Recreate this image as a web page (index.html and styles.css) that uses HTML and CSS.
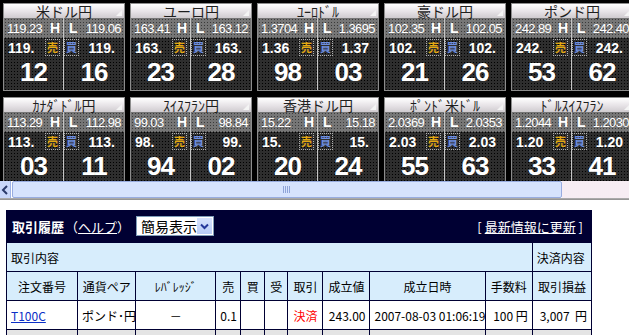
FILE: index.html
```html
<!DOCTYPE html>
<html lang="ja">
<head>
<meta charset="utf-8">
<link rel="stylesheet" href="styles.css">
</head>
<body>
<div class="board">
  <div class="pane"><div class="ttl">米ドル円<span class="grip"></span></div><div class="body">
    <div class="half"><div class="hl"><span>119.23</span><b>H</b></div><div class="mid"><b>119.</b><span class="tag sell">売</span></div><div class="big">12</div></div>
    <div class="half r"><div class="hl"><b>L</b><span>119.06</span></div><div class="mid"><span class="tag buy">買</span><b>119.</b></div><div class="big">16</div></div>
  </div></div>
  <div class="pane"><div class="ttl">ユーロ円<span class="grip"></span></div><div class="body">
    <div class="half"><div class="hl"><span>163.41</span><b>H</b></div><div class="mid"><b>163.</b><span class="tag sell">売</span></div><div class="big">23</div></div>
    <div class="half r"><div class="hl"><b>L</b><span>163.12</span></div><div class="mid"><span class="tag buy">買</span><b>163.</b></div><div class="big">28</div></div>
  </div></div>
  <div class="pane"><div class="ttl">ﾕｰﾛﾄﾞﾙ<span class="grip"></span></div><div class="body">
    <div class="half"><div class="hl"><span>1.3704</span><b>H</b></div><div class="mid"><b>1.36</b><span class="tag sell">売</span></div><div class="big">98</div></div>
    <div class="half r"><div class="hl"><b>L</b><span>1.3695</span></div><div class="mid"><span class="tag buy">買</span><b>1.37</b></div><div class="big">03</div></div>
  </div></div>
  <div class="pane"><div class="ttl">豪ドル円<span class="grip"></span></div><div class="body">
    <div class="half"><div class="hl"><span>102.35</span><b>H</b></div><div class="mid"><b>102.</b><span class="tag sell">売</span></div><div class="big">21</div></div>
    <div class="half r"><div class="hl"><b>L</b><span>102.05</span></div><div class="mid"><span class="tag buy">買</span><b>102.</b></div><div class="big">26</div></div>
  </div></div>
  <div class="pane"><div class="ttl">ポンド円<span class="grip"></span></div><div class="body">
    <div class="half"><div class="hl"><span>242.89</span><b>H</b></div><div class="mid"><b>242.</b><span class="tag sell">売</span></div><div class="big">53</div></div>
    <div class="half r"><div class="hl"><b>L</b><span>242.40</span></div><div class="mid"><span class="tag buy">買</span><b>242.</b></div><div class="big">62</div></div>
  </div></div>

  <div class="pane"><div class="ttl">ｶﾅﾀﾞﾄﾞﾙ円<span class="grip"></span></div><div class="body">
    <div class="half"><div class="hl"><span>113.29</span><b>H</b></div><div class="mid"><b>113.</b><span class="tag sell">売</span></div><div class="big">03</div></div>
    <div class="half r"><div class="hl"><b>L</b><span>112.98</span></div><div class="mid"><span class="tag buy">買</span><b>113.</b></div><div class="big">11</div></div>
  </div></div>
  <div class="pane"><div class="ttl">ｽｲｽﾌﾗﾝ円<span class="grip"></span></div><div class="body">
    <div class="half"><div class="hl"><span>99.03</span><b>H</b></div><div class="mid"><b>98.</b><span class="tag sell">売</span></div><div class="big">94</div></div>
    <div class="half r"><div class="hl"><b>L</b><span>98.84</span></div><div class="mid"><span class="tag buy">買</span><b>99.</b></div><div class="big">02</div></div>
  </div></div>
  <div class="pane"><div class="ttl">香港ドル円<span class="grip"></span></div><div class="body">
    <div class="half"><div class="hl"><span>15.22</span><b>H</b></div><div class="mid"><b>15.</b><span class="tag sell">売</span></div><div class="big">20</div></div>
    <div class="half r"><div class="hl"><b>L</b><span>15.18</span></div><div class="mid"><span class="tag buy">買</span><b>15.</b></div><div class="big">24</div></div>
  </div></div>
  <div class="pane"><div class="ttl">ﾎﾟﾝﾄﾞ米ﾄﾞﾙ<span class="grip"></span></div><div class="body">
    <div class="half"><div class="hl"><span>2.0369</span><b>H</b></div><div class="mid"><b>2.03</b><span class="tag sell">売</span></div><div class="big">55</div></div>
    <div class="half r"><div class="hl"><b>L</b><span>2.0353</span></div><div class="mid"><span class="tag buy">買</span><b>2.03</b></div><div class="big">63</div></div>
  </div></div>
  <div class="pane"><div class="ttl">ﾄﾞﾙｽｲｽﾌﾗﾝ<span class="grip"></span></div><div class="body">
    <div class="half"><div class="hl"><span>1.2044</span><b>H</b></div><div class="mid"><b>1.20</b><span class="tag sell">売</span></div><div class="big">33</div></div>
    <div class="half r"><div class="hl"><b>L</b><span>1.2030</span></div><div class="mid"><span class="tag buy">買</span><b>1.20</b></div><div class="big">41</div></div>
  </div></div>
</div>

<div class="hscroll">
  <div class="sb-btn"><svg width="8" height="10" viewBox="0 0 8 10"><path d="M6 1 L2 5 L6 9" fill="none" stroke="#2a3a6a" stroke-width="2"/></svg></div>
  <div class="sb-thumb"><span class="sb-grip"></span></div>
  <div class="sb-track"></div>
</div>
<div class="hr"></div>

<div class="history">
  <div class="hist-head">
    <span class="hist-title">取引履歴</span>
    <span class="help">（<a href="#">ヘルプ</a>）</span>
    <div class="sel"><span class="sel-text">簡易表示</span><span class="sel-btn"><svg width="9" height="7" viewBox="0 0 9 7"><path d="M1 1.5 L4.5 5 L8 1.5" fill="none" stroke="#24379a" stroke-width="2"/></svg></span></div>
    <span class="refresh">[ <a href="#">最新情報に更新</a> ]</span>
  </div>
  <table class="tbl">
    <colgroup>
      <col class="c1"><col class="c2"><col class="c3"><col class="c4"><col class="c5"><col class="c6"><col class="c7"><col class="c8"><col class="c9"><col class="c10"><col class="c11">
    </colgroup>
    <tr class="blue"><td colspan="10" class="l">取引内容</td><td class="l">決済内容</td></tr>
    <tr class="blue">
      <td>注文番号</td><td>通貨ペア</td><td>ﾚﾊﾞﾚｯｼﾞ</td><td>売</td><td>買</td><td>受</td><td>取引</td><td>成立値</td><td>成立日時</td><td>手数料</td><td>取引損益</td>
    </tr>
    <tr class="data">
      <td class="l"><a href="#">T100C</a></td><td>ポンド･円</td><td>－</td><td class="l">0.1</td><td></td><td></td><td class="red">決済</td><td class="r">243.00</td><td>2007-08-03 01:06:19</td><td class="r">100 円</td><td class="r">3,007&nbsp; 円</td>
    </tr>
    <tr class="grey"><td></td><td></td><td></td><td></td><td></td><td></td><td></td><td></td><td></td><td></td><td></td></tr>
  </table>
</div>
</body>
</html>
```
FILE: styles.css
```css
html, body {
  margin: 0;
  padding: 0;
}
body {
  width: 629px;
  height: 335px;
  overflow: hidden;
  background: #fff;
  font-family: "Liberation Sans", "Noto Sans CJK JP", sans-serif;
}

/* ---------- rate board ---------- */
.board {
  height: 181px;
  box-sizing: border-box;
  overflow: hidden;
  background: #000;
  padding: 3px 0 0 3px;
  display: grid;
  grid-template-columns: repeat(5, 122px);
  column-gap: 5px;
  row-gap: 6px;
  align-content: start;
}
.pane {
  height: 88px;
  box-sizing: border-box;
  border: 1px solid #8c8c8c;
  display: flex;
  flex-direction: column;
  background-color: #2e2e2e;
  background-image: radial-gradient(circle, #000 0.8px, transparent 1px);
  background-size: 3px 3px;
}
.ttl {
  position: relative;
  height: 16px;
  display: flex;
  align-items: center;
  justify-content: center;
  line-height: 1;
  font-family: "Noto Sans CJK JP", sans-serif;
  font-size: 14px;
  color: #1e1e1e;
  background: linear-gradient(#ffffff, #e6e2e6 55%, #cfcbcf);
  white-space: nowrap;
}
.grip {
  position: absolute;
  right: 2px;
  bottom: 2px;
  width: 0;
  height: 0;
  border-left: 6px solid transparent;
  border-bottom: 6px solid #f4f4f4;
}
.body {
  flex: 1;
  display: flex;
}
.half {
  width: 59px;
  border-right: 1px solid #c4c4c4;
  display: flex;
  flex-direction: column;
}
.half.r {
  flex: 1;
  border-right: 0;
}
.hl {
  height: 20px;
  display: flex;
  justify-content: space-between;
  align-items: center;
  padding: 0 3px;
  color: #fff;
  font-size: 13px;
  line-height: 1;
  letter-spacing: -0.6px;
  background-color: #767676;
  background-image: radial-gradient(circle, #3a3a3a 0.7px, transparent 0.9px);
  background-size: 3px 3px;
}
.hl b {
  font-size: 14px;
  letter-spacing: 0;
}
.half.r .hl {
  padding: 0 3px 0 5px;
}
.mid {
  height: 19px;
  display: flex;
  justify-content: space-between;
  align-items: center;
  padding: 0 3px 0 4px;
}
.half.r .mid {
  padding: 0 9px 0 0;
}
.mid b {
  color: #fff;
  font-size: 14px;
}
.tag {
  width: 13px;
  height: 15px;
  border: 1px dotted #b0b0b0;
  display: flex;
  align-items: center;
  justify-content: center;
  font-family: "Noto Sans CJK JP", sans-serif;
  font-size: 11px;
  font-weight: bold;
  line-height: 1;
}
.sell { color: #e3a812; }
.buy { color: #6e8fe0; }
.big {
  flex: 1;
  display: flex;
  align-items: center;
  justify-content: center;
  color: #fff;
  font-size: 26px;
  font-weight: bold;
  letter-spacing: -1px;
  padding-bottom: 2px;
}

/* ---------- scrollbar ---------- */
.hscroll {
  height: 17px;
  display: flex;
  background: #fff;
}
.sb-btn {
  width: 10px;
  display: flex;
  align-items: center;
  justify-content: center;
  background: #c9d8fb;
  border-right: 1px solid #9fb3e6;
}
.sb-thumb {
  width: 550px;
  margin-left: 1px;
  box-sizing: border-box;
  border: 1px solid #98ace0;
  border-radius: 2px;
  background-color: #c8d7fc;
  background-image: radial-gradient(circle, #e6eeff 0.6px, transparent 0.8px);
  background-size: 2px 2px;
  display: flex;
  align-items: center;
  justify-content: center;
}
.sb-grip {
  width: 8px;
  height: 7px;
  background: repeating-linear-gradient(90deg, #8ea3d8 0 1px, transparent 1px 2px);
}
.sb-track {
  flex: 1;
  background-color: #fbf4ef;
  background-image: radial-gradient(circle, #f0e4f8 0.6px, transparent 0.8px);
  background-size: 2px 2px;
}
.hr {
  height: 2px;
  background: linear-gradient(#b4b4b4, #8c8c8c);
}

/* ---------- history ---------- */
.history {
  margin: 10px 0 0 6px;
  width: 586px;
  background-color: #000033;
}
.hist-head {
  height: 32px;
  display: flex;
  align-items: center;
  padding: 0 9px 0 6px;
  color: #fff;
  font-family: "Noto Sans CJK JP", sans-serif;
  font-size: 13px;
}
.hist-title {
  font-weight: bold;
}
.help a,
.refresh a {
  color: #fff;
}
.help {
  margin-left: 1px;
}
.sel {
  margin-left: 6px;
  width: 78px;
  height: 20px;
  box-sizing: border-box;
  border: 1px solid #7f9db9;
  background: #fff;
  display: flex;
  align-items: center;
  justify-content: space-between;
  padding: 0 1px 0 4px;
}
.sel-text {
  color: #000;
  font-size: 14px;
  line-height: 1;
}
.sel-btn {
  width: 15px;
  height: 16px;
  background: linear-gradient(#d6e2fd, #b7cbf6);
  display: flex;
  align-items: center;
  justify-content: center;
}
.refresh {
  margin-left: auto;
}

.tbl {
  width: 586px;
  border-collapse: collapse;
  table-layout: fixed;
  font-family: "Noto Sans CJK JP", sans-serif;
  font-size: 12px;
  color: #000;
}
.c1 { width: 71px; }
.c2 { width: 58px; }
.c3 { width: 80px; }
.c4 { width: 25px; }
.c5 { width: 24px; }
.c6 { width: 23px; }
.c7 { width: 35px; }
.c8 { width: 47px; }
.c9 { width: 115px; }
.c10 { width: 47px; }
.c11 { width: 59px; }
.tbl td {
  border: 1px solid #000033;
  height: 28px;
  padding: 0 4px;
  text-align: center;
  white-space: nowrap;
  overflow: hidden;
}
.tbl td.l { text-align: left; }
.tbl td.r { text-align: right; }
.tbl .blue td {
  background-color: #c7e5f9;
  background-image: radial-gradient(circle, #e8f5ff 0.6px, transparent 0.8px);
  background-size: 2px 2px;
}
.tbl .data td {
  background: #fff;
}
.tbl .data a {
  color: #0b2fc6;
}
.tbl .red {
  color: #f00;
}
.tbl .grey td {
  background-color: #d6d6d6;
  background-image: radial-gradient(circle, #f4f4f4 0.6px, transparent 0.8px);
  background-size: 2px 2px;
}
```
